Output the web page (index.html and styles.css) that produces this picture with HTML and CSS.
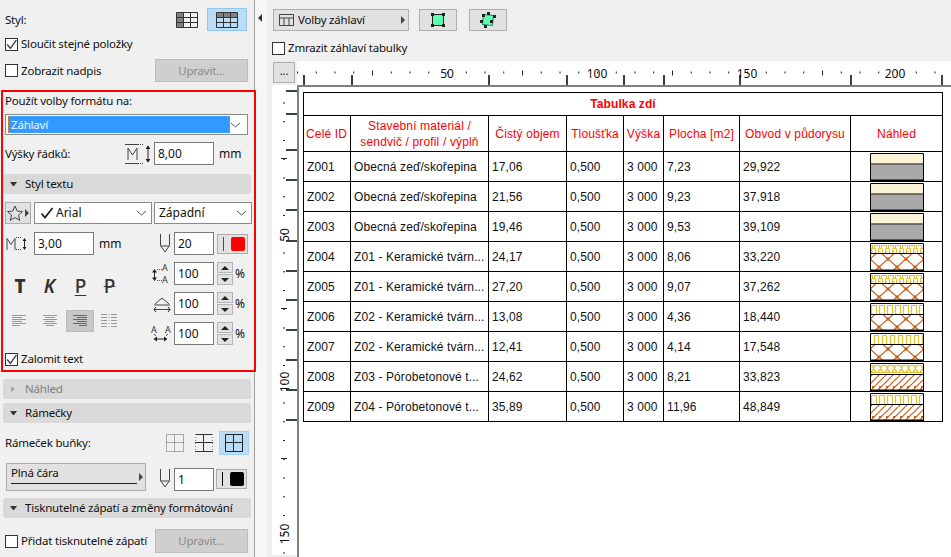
FILE: index.html
```html
<!DOCTYPE html>
<html lang="cs">
<head>
<meta charset="utf-8">
<title>Volby záhlaví</title>
<link rel="stylesheet" href="styles.css">
</head>
<body>
<svg class="defs" width="0" height="0" aria-hidden="true">
  <defs>
    <pattern id="p-zig" width="7" height="11" patternUnits="userSpaceOnUse"><path d="M0 2.500h2.500v3h2v-3H7M1.500 5.500v5.500M5.500 5.500v5.500M3.500 8.500h-2" fill="none" stroke="#e6bf2c" stroke-width="1.200"/></pattern>
    <pattern id="p-arch" width="8" height="11" patternUnits="userSpaceOnUse"><path d="M1.500 11V2.500h5V11" fill="none" stroke="#e6bf2c" stroke-width="1.200"/></pattern>
    <pattern id="p-arch2" width="8" height="11" patternUnits="userSpaceOnUse"><path d="M4.500 11V2.500H8M0 2.500h.5V11" fill="none" stroke="#e6bf2c" stroke-width="1.200"/></pattern>
    <pattern id="p-zig2" width="7" height="11" patternUnits="userSpaceOnUse"><path d="M0 2.500h2.500l1 3 1-3H7M1 9l2.500-3L6 9M0 9.500h7" fill="none" stroke="#e6bf2c" stroke-width="1.200"/></pattern>
    <pattern id="p-lat" width="18" height="16" patternUnits="userSpaceOnUse"><path d="M0 0L18 16M18 0L0 16" fill="none" stroke="#c8601a" stroke-width="1.200"/><rect x="7.500" y="6.500" width="3" height="3" fill="#c8601a"/><path d="M0 0h1.500v1.500H0zM16.500 0H18v1.500h-1.500zM0 14.500h1.500V16H0zM16.500 14.500H18V16h-1.500z" fill="#c8601a"/></pattern>
    <pattern id="p-diag" width="14" height="14" patternUnits="userSpaceOnUse"><path d="M0 7L7 0M0 14L14 0M7 14L14 7" fill="none" stroke="#c8601a" stroke-width="1.200"/><rect x="9" y="9" width="2" height="2" fill="#c8601a"/><rect x="2" y="9" width="2" height="2" fill="#c8601a"/></pattern>
    <symbol id="sw-plain" viewBox="0 0 54 28"><rect x=".5" y=".5" width="53" height="11" fill="#faf3d6"/><rect x=".5" y="11.500" width="53" height="16" fill="#a9a9a9"/><path d="M.5.5h53v26.500h-53zM0 11h54" fill="none" stroke="#000"/><path d="M0 27.500h54" stroke="#000"/></symbol>
    <symbol id="sw-a" viewBox="0 0 54 28"><rect x=".5" y=".5" width="53" height="10.500" fill="url(#p-zig)"/><rect x=".5" y="11" width="53" height="16" fill="url(#p-lat)"/><path d="M.5.5h53v26.500h-53zM0 10.500h54M0 27.500h54" fill="none" stroke="#000"/></symbol>
    <symbol id="sw-b" viewBox="0 0 54 28"><rect x=".5" y=".5" width="53" height="10.500" fill="url(#p-arch)"/><rect x=".5" y="11" width="53" height="16" fill="url(#p-lat)"/><path d="M.5.5h53v26.500h-53zM0 11.500h54M0 27.500h54" fill="none" stroke="#000"/></symbol>
    <symbol id="sw-c" viewBox="0 0 54 28"><rect x=".5" y=".5" width="53" height="10.500" fill="url(#p-arch2)"/><rect x=".5" y="11" width="53" height="16" fill="url(#p-lat)"/><path d="M.5.5h53v26.500h-53zM0 11.500h54M0 27.500h54" fill="none" stroke="#000"/></symbol>
    <symbol id="sw-d" viewBox="0 0 54 28"><rect x=".5" y=".5" width="53" height="10.500" fill="url(#p-zig2)"/><rect x=".5" y="11" width="53" height="16" fill="url(#p-diag)"/><path d="M.5.5h53v26.500h-53zM0 11.500h54M0 27.500h54" fill="none" stroke="#000"/></symbol>
    <symbol id="sw-e" viewBox="0 0 54 28"><rect x=".5" y=".5" width="53" height="10.500" fill="url(#p-arch)"/><rect x=".5" y="11" width="53" height="16" fill="url(#p-diag)"/><path d="M.5.5h53v26.500h-53zM0 11.500h54M0 27.500h54" fill="none" stroke="#000"/></symbol>
    <symbol id="i-pen" viewBox="0 0 12 22"><path d="M1.500 1v11.500L6 19l4.500-6.500V1M1.500 13h9" fill="none" stroke="#444"/></symbol>
    <symbol id="i-check" viewBox="0 0 12 12"><path d="M2 6l3 3.500L10.500 2" fill="none" stroke="#444" stroke-width="1.300"/></symbol>
  </defs>
</svg>

<div class="app">
  <aside class="sidebar">
    <div class="row r-style">
      <span class="lbl">Styl:</span>
      <span class="style-opts">
        <svg class="ic-table" width="22" height="16" viewBox="0 0 22 16"><rect x="1" y="1" width="7" height="14" fill="#808080"/><path d="M.5.5h21v15H.5zM7.500.5v15M14.500.5v15M.5 5.500h21M.5 10.500h21" fill="none" stroke="#333"/></svg>
        <span class="opt-on"><svg width="22" height="16" viewBox="0 0 22 16"><rect x="1" y="1" width="20" height="4" fill="#808080"/><path d="M.5.5h21v15H.5zM7.500.5v15M14.500.5v15M.5 5.500h21M.5 10.500h21" fill="none" stroke="#333"/></svg></span>
      </span>
    </div>
    <label class="row r-check1"><span class="cb"><svg width="12" height="12"><use href="#i-check"/></svg></span><span class="lbl">Sloučit stejné položky</span></label>
    <div class="row r-btn">
      <label class="chk"><span class="cb"></span><span class="lbl">Zobrazit nadpis</span></label>
      <span class="btn-off">Upravit...</span>
    </div>

    <section class="format">
      <div class="f-label lbl">Použít volby formátu na:</div>
      <div class="select sel-main"><span class="sel-val">Záhlaví</span><svg class="chev" width="11" height="6" viewBox="0 0 11 6"><path d="M1 1l4.500 4L10 1" fill="none" stroke="#555"/></svg></div>
      <div class="row r-height">
        <span class="lbl">Výšky řádků:</span>
        <svg class="ic-m" width="26" height="20" viewBox="0 0 26 20"><path d="M1 .5h13M1 19.500h13" stroke="#444"/><path d="M4 16V4l4.500 7L13 4v12" fill="none" stroke="#444"/><path d="M14 .5h6M14 19.500h6" stroke="#444" stroke-dasharray="1 1"/><path d="M24 2v16" stroke="#222"/><path d="M21.500 5L24 1.500 26.500 5zM21.500 15L24 18.500 26.500 15z" fill="#222"/></svg>
        <span class="input w60">8,00</span>
        <span class="unit">mm</span>
      </div>
      <div class="head"><i class="tri"></i>Styl textu</div>
      <div class="row r-font">
        <span class="btn star"><svg width="24" height="16" viewBox="0 0 24 16"><path d="M9 1l2.200 5 5.300.5-4 3.600 1.200 5.200L9 12.600l-4.700 2.700 1.200-5.200-4-3.600L6.800 6z" fill="none" stroke="#444"/><path d="M19 4l4 4-4 4z" fill="#444"/></svg></span>
        <span class="select sel-font"><svg class="tick" width="14" height="12" viewBox="0 0 14 12"><path d="M1.500 6.500L5 10.500 12.500 1" fill="none" stroke="#222" stroke-width="1.800"/></svg><span>Arial</span><svg class="chev" width="11" height="6" viewBox="0 0 11 6"><path d="M1 1l4.500 4L10 1" fill="none" stroke="#555"/></svg></span>
        <span class="select sel-script"><span>Západní</span><svg class="chev" width="11" height="6" viewBox="0 0 11 6"><path d="M1 1l4.500 4L10 1" fill="none" stroke="#555"/></svg></span>
      </div>
      <div class="f-grid">
        <div class="f-left">
          <div class="f-size">
            <svg class="ic-ms" width="21" height="14" viewBox="0 0 21 14"><path d="M1 13V1.500l4 6 4-6V13" fill="none" stroke="#444"/><path d="M10 .5h6M10 12.500h6" stroke="#444" stroke-dasharray="1 1"/><path d="M18.500 2v10" stroke="#222"/><path d="M16.500 4L18.500 1 20.500 4zM16.500 10l2 3 2-3z" fill="#222"/></svg>
            <span class="input w60">3,00</span>
            <span class="unit">mm</span>
          </div>
          <div class="f-type">
            <b class="g g-t">T</b><em class="g g-k">K</em><u class="g g-p">P</u><s class="g g-s">P</s>
          </div>
          <div class="f-align">
            <span class="al"><svg width="16" height="12" viewBox="0 0 16 12"><path d="M1 .5h14M1 2.500h10M1 4.500h14M1 6.500h10M1 8.500h14M1 10.500h8" stroke="#999"/></svg></span>
            <span class="al"><svg width="16" height="12" viewBox="0 0 16 12"><path d="M1 .5h14M3 2.500h10M1 4.500h14M3 6.500h10M1 8.500h14M4 10.500h8" stroke="#999"/></svg></span>
            <span class="al al-on"><svg width="16" height="12" viewBox="0 0 16 12"><path d="M1 .5h14M5 2.500h10M1 4.500h14M5 6.500h10M1 8.500h14M7 10.500h8" stroke="#666"/></svg></span>
            <span class="al"><svg width="16" height="14" viewBox="0 0 16 14"><path d="M0 .5h6M0 3.500h6M0 6.500h6M0 9.500h6M0 12.500h6M10 .5h6M10 3.500h6M10 6.500h6M10 9.500h6M10 12.500h6" stroke="#999"/><path d="M8 0v14" stroke="#999" stroke-dasharray="1 2"/></svg></span>
          </div>
        </div>
        <div class="f-right">
          <div class="fr"><svg class="fr-ic" width="12" height="22"><use href="#i-pen"/></svg><span class="input">20</span><span class="color"><i class="c-line red"></i><i class="c-box red"></i></span></div>
          <div class="fr"><svg class="fr-ic" width="20" height="23" viewBox="0 0 20 23"><text x="14" y="9" class="mini">A</text><text x="14" y="21" class="mini">A</text><path d="M3.500 9v8" stroke="#222"/><path d="M1 10.500L3.500 7 6 10.500zM1 15.500L3.500 19 6 15.500z" fill="#222"/><path d="M6 7.500h5M6 18.500h5" stroke="#555" stroke-dasharray="1 1"/></svg><span class="input">100</span><span class="stepper"><i class="up"></i><i class="dn"></i></span><span class="pct">%</span></div>
          <div class="fr"><svg class="fr-ic" width="18" height="16" viewBox="0 0 18 16"><path d="M2 8l7-6 7 6" fill="none" stroke="#444"/><path d="M1 9h16M1 13.500h16" stroke="#444"/><path d="M3 11l-2 2.500L3 16M15 11l2 2.500-2 2.500" fill="none" stroke="#222"/></svg><span class="input">100</span><span class="stepper"><i class="up"></i><i class="dn"></i></span><span class="pct">%</span></div>
          <div class="fr"><svg class="fr-ic ic-wide" width="23" height="23" viewBox="0 0 23 23"><text x="5" y="11" class="mini">A</text><text x="19" y="11" class="mini">A</text><path d="M6 17h11" stroke="#222"/><path d="M8 14.500L4.500 17 8 19.500zM15 14.500L18.500 17 15 19.500z" fill="#222"/><path d="M5 12l2 2M19 12l-2 2" stroke="#555"/></svg><span class="input">100</span><span class="stepper"><i class="up"></i><i class="dn"></i></span><span class="pct">%</span></div>
        </div>
      </div>
      <label class="row r-wrap"><span class="cb"><svg width="12" height="12"><use href="#i-check"/></svg></span><span class="lbl">Zalomit text</span></label>
    </section>

    <div class="head head-dis head-a"><i class="tri-r"></i>Náhled</div>
    <div class="head head-b"><i class="tri"></i>Rámečky</div>
    <div class="row r-border">
      <span class="lbl">Rámeček buňky:</span>
      <span class="b-opts">
        <svg width="18" height="18" viewBox="0 0 18 18"><path d="M.5.5h17v17H.5zM8.500.5v17M.5 8.500h17" fill="none" stroke="#666" stroke-dasharray="1 1"/></svg>
        <svg class="b2" width="18" height="18" viewBox="0 0 18 18"><path d="M0 .5h18M0 8.500h18M0 17.500h18" stroke="#333"/><path d="M8.500 0v18" stroke="#333"/><path d="M.5 0v18M17.500 0v18" stroke="#888" stroke-dasharray="1 2"/></svg>
        <span class="b-on"><svg width="18" height="18" viewBox="0 0 18 18"><path d="M.5.5h17v17H.5zM8.500.5v17M.5 8.500h17" fill="none" stroke="#222"/></svg></span>
      </span>
    </div>
    <div class="row r-line">
      <span class="line-btn"><span class="lt">Plná čára</span><i class="ln"></i><i class="ar"></i></span>
      <svg class="pen2" width="12" height="22"><use href="#i-pen"/></svg>
      <span class="input w40">1</span>
      <span class="color c2"><i class="c-line blk"></i><i class="c-box blk"></i></span>
    </div>
    <div class="head head-c"><i class="tri"></i>Tisknutelné zápatí a změny formátování</div>
    <div class="row r-foot">
      <label class="chk"><span class="cb"></span><span class="lbl">Přidat tisknutelné zápatí</span></label>
      <span class="btn-off">Upravit...</span>
    </div>
  </aside>

  <div class="strip"><i class="tri-l"></i></div>

  <main class="main">
    <div class="toolbar">
      <span class="popup">
        <svg width="15" height="12" viewBox="0 0 15 12"><path d="M.5.5h14v11H.5zM.5 4h14M5 4v7.500M10 4v7.500" fill="none" stroke="#444"/></svg>
        <span class="lbl">Volby záhlaví</span><i class="ar"></i>
      </span>
      <span class="tbtn"><svg width="14" height="14" viewBox="0 0 14 14"><rect x="1.500" y="1.500" width="11" height="11" fill="#5dffb0" stroke="#222"/><path d="M0 0h3v3H0zM11 0h3v3h-3zM0 11h3v3H0zM11 11h3v3h-3z" fill="#222"/></svg></span>
      <span class="tbtn tb2"><svg width="16" height="16" viewBox="0 0 16 16"><path d="M3 3h10v10H3z" fill="#5dffb0" stroke="#1f8a60" transform="rotate(6 8 8)"/><path d="M2 2h3v3H2zM7 0h3v3H7zM13 3h3v3h-3zM0 8h3v3H0zM10 8h3v3h-3zM4 13h3v3H4z" fill="#222"/></svg></span>
    </div>
    <label class="freeze"><span class="cb"></span><span class="lbl">Zmrazit záhlaví tabulky</span></label>

    <div class="sheet">
      <div class="corner"><span class="more">...</span></div>
      <svg class="ruler-top" width="654" height="24" viewBox="0 0 654 24">
        <path d="M0 11.500H654" stroke="#222" stroke-width="2" stroke-dasharray="1 17.750" stroke-dashoffset="0"/>
        <path d="M75 12H654" stroke="#222" stroke-width="5" stroke-dasharray="1 149"/>
        <path d="M7 14v10M55 14v10M192 14v10M270 14v10M327 14v10M367 14v10M443 14v10M554 14v10M645 14v10" stroke="#36424a" stroke-width="2"/>
        <text x="150" y="17" class="rt">50</text>
        <text x="300" y="17" class="rt">100</text>
        <text x="450" y="17" class="rt">150</text>
        <text x="598" y="17" class="rt">200</text>
      </svg>
      <svg class="ruler-left" width="25" height="470" viewBox="0 0 25 470">
        <path d="M12 17.500V470" stroke="#222" stroke-width="2" stroke-dasharray="1 17.750"/>
        <path d="M9 73.500h6M9 223.500h6M9 373.500h6" stroke="#222"/>
        <path d="M14 6h11M14 29h11M14 65h11M14 95h11M14 125h11M14 156h11M14 186h11M14 215h11M14 245h11M14 275h11M14 305h11M14 335h11" stroke="#36424a" stroke-width="2"/>
        <text class="rt" transform="translate(17 150) rotate(-90)">50</text>
        <text class="rt" transform="translate(17 297) rotate(-90)">100</text>
        <text class="rt" transform="translate(17 449) rotate(-90)">150</text>
      </svg>
      <div class="canvas">
        <table class="sched">
          <colgroup><col class="c1"><col class="c2w"><col class="c3"><col class="c4"><col class="c5"><col class="c6"><col class="c7"><col class="c8"></colgroup>
          <tr class="t-title"><th colspan="8">Tabulka zdí</th></tr>
          <tr class="t-head">
            <td class="left">Celé ID</td><td>Stavební materiál /<br>sendvič / profil / výplň</td><td>Čistý objem</td><td>Tloušťka</td><td>Výška</td><td>Plocha [m2]</td><td>Obvod v půdorysu</td><td>Náhled</td>
          </tr>
          <tr><td>Z001</td><td>Obecná zeď/skořepina</td><td>17,06</td><td>0,500</td><td>3 000</td><td>7,23</td><td>29,922</td><td class="pv"><svg width="54" height="28"><use href="#sw-plain"/></svg></td></tr>
          <tr><td>Z002</td><td>Obecná zeď/skořepina</td><td>21,56</td><td>0,500</td><td>3 000</td><td>9,23</td><td>37,918</td><td class="pv"><svg width="54" height="28"><use href="#sw-plain"/></svg></td></tr>
          <tr><td>Z003</td><td>Obecná zeď/skořepina</td><td>19,46</td><td>0,500</td><td>3 000</td><td>9,53</td><td>39,109</td><td class="pv"><svg width="54" height="28"><use href="#sw-plain"/></svg></td></tr>
          <tr><td>Z004</td><td>Z01 - Keramické tvárn...</td><td>24,17</td><td>0,500</td><td>3 000</td><td>8,06</td><td>33,220</td><td class="pv"><svg width="54" height="28"><use href="#sw-a"/></svg></td></tr>
          <tr><td>Z005</td><td>Z01 - Keramické tvárn...</td><td>27,20</td><td>0,500</td><td>3 000</td><td>9,07</td><td>37,262</td><td class="pv"><svg width="54" height="28"><use href="#sw-a"/></svg></td></tr>
          <tr><td>Z006</td><td>Z02 - Keramické tvárn...</td><td>13,08</td><td>0,500</td><td>3 000</td><td>4,36</td><td>18,440</td><td class="pv"><svg width="54" height="28"><use href="#sw-b"/></svg></td></tr>
          <tr><td>Z007</td><td>Z02 - Keramické tvárn...</td><td>12,41</td><td>0,500</td><td>3 000</td><td>4,14</td><td>17,548</td><td class="pv"><svg width="54" height="28"><use href="#sw-c"/></svg></td></tr>
          <tr><td>Z008</td><td>Z03 - Pórobetonové t...</td><td>24,62</td><td>0,500</td><td>3 000</td><td>8,21</td><td>33,823</td><td class="pv"><svg width="54" height="28"><use href="#sw-d"/></svg></td></tr>
          <tr><td>Z009</td><td>Z04 - Pórobetonové t...</td><td>35,89</td><td>0,500</td><td>3 000</td><td>11,96</td><td>48,849</td><td class="pv"><svg width="54" height="28"><use href="#sw-e"/></svg></td></tr>
        </table>
      </div>
    </div>
  </main>
</div>
</body>
</html>
```

FILE: styles.css
```css
* { box-sizing: border-box; }
html, body { margin: 0; height: 100%; }
body { width: 951px; height: 557px; overflow: hidden; background: #f0f0f0; color: #111; font: 11.5px/16px "Noto Sans", sans-serif; letter-spacing: -.2px; }
i { display: block; font-style: normal; }
svg { display: block; flex: none; }
.defs { position: absolute; }
.app { display: flex; height: 557px; }

.sidebar { flex: none; width: 255px; padding-top: 8px; border-right: 1px solid #a0a0a0; }
.row { display: flex; align-items: center; margin-left: 5px; }
.lbl { white-space: nowrap; }
.cb { flex: none; display: block; width: 13px; height: 13px; background: #fff; border: 1px solid #333; margin-right: 3px; }
.cb svg { margin: -1px 0 0 -1px; width: 13px; height: 13px; }
.chk { display: flex; align-items: center; width: 150px; }
.r-style { height: 23px; justify-content: space-between; width: 242px; }
.style-opts { display: flex; align-items: center; gap: 9px; }
.opt-on { display: flex; align-items: center; justify-content: center; width: 40px; height: 23px; background: #bbdcf6; border: 1px solid #92c8f2; }
.r-check1 { height: 20px; margin-top: 3px; }
.r-btn { height: 23px; margin-top: 5px; }
.btn-off { display: flex; align-items: center; justify-content: center; width: 93px; height: 23px; background: #cfcfcf; border: 1px solid #bdbdbd; color: #8a8a8a; }

.format { position: relative; z-index: 1; width: 255px; height: 282px; margin: 8px 0 0 1px; border: 2px solid #f00; }
.f-label { height: 18px; margin-left: 2px; line-height: 18px; }
.select { display: flex; align-items: center; background: #fff; border: 1px solid #8a8a8a; height: 21px; }
.sel-main { width: 243px; margin: 4px 0 0 2px; padding: 2px; }
.sel-val { display: block; width: 222px; height: 17px; line-height: 15px; padding-left: 2px; background: #3399ff; border: 1px dotted #c88a3a; color: #e8f4ff; }
.chev { margin-left: auto; margin-right: 4px; }
.r-height { margin: 7px 0 0 2px; height: 23px; }
.r-height .lbl { width: 119px; }
.ic-m { margin-right: 4px; }
.input { display: flex; align-items: center; flex: none; height: 23px; padding-left: 3px; background: #fff; border: 1px solid #7a7a7a; font-size: 12px; letter-spacing: 0; }
.w60 { width: 60px; }
.w40 { width: 40px; }
.unit { margin-left: 5px; font-size: 12px; letter-spacing: 0; }

.head { display: flex; align-items: center; height: 20px; width: 248px; background: #d9d9d9; border-radius: 3px; padding-left: 7px; white-space: nowrap; }
.format .head { margin-top: 9px; }
.tri { height: 0; margin-right: 8px; border: 3.500px solid transparent; border-top: 4px solid #333; border-bottom: 0; width: 7px; }
.tri-r { width: 0; height: 0; margin: 0 10px 0 1px; border-left: 4px solid #a5a5a5; border-top: 3.500px solid transparent; border-bottom: 3.500px solid transparent; }
.head-dis { color: #808080; }
.head-a { margin: 7px 0 0 3px; }
.head-b { margin: 4px 0 0 3px; }
.head-c { margin: 7px 0 0 3px; }

.r-font { margin: 8px 0 0 2px; height: 22px; }
.btn { display: flex; align-items: center; justify-content: center; background: #e1e1e1; border: 1px solid #adadad; }
.star { width: 26px; height: 22px; }
.sel-font { width: 118px; height: 22px; margin-left: 3px; padding-left: 5px; font-size: 12px; letter-spacing: 0; }
.tick { margin-right: 2px; }
.sel-script { width: 98px; height: 22px; margin-left: 2px; padding-left: 4px; font-size: 12px; letter-spacing: 0; }

.f-grid { display: flex; margin: 8px 0 0 2px; height: 113px; }
.f-left { width: 147px; }
.f-size { display: flex; align-items: center; height: 23px; }
.ic-ms { margin: 0 7px 0 1px; }
.f-type { display: flex; align-items: center; height: 26px; margin-top: 18px; font-size: 19px; line-height: 26px; color: #333; letter-spacing: 0; }
.g { display: block; width: 30px; text-align: center; }
.g-t { font-weight: 800; }
.g-k { font-weight: 600; width: 29px; }
.g-p { width: 33px; text-underline-offset: 2px; text-decoration: underline; text-decoration-thickness: 1px; font-weight: 500; }
.g-s { width: 25px; text-decoration: line-through; text-decoration-thickness: 1px; font-weight: 500; }
.f-align { display: flex; align-items: center; height: 22px; margin-top: 11px; }
.al { display: flex; align-items: center; justify-content: center; width: 16px; height: 22px; margin-left: 6px; }
.al + .al { margin-left: 15px; }
.al-on { width: 28px; background: #c8c8c8; border: 1px solid #bcbcbc; }
.al + .al-on { margin-left: 8px; }
.al-on + .al { margin-left: 7px; }
.f-right { display: flex; flex-direction: column; gap: 7px; }
.fr { display: grid; grid-template-columns: 19px 40px 19px auto; column-gap: 3px; align-items: center; height: 23px; }
.fr-ic { justify-self: end; overflow: visible; }
.ic-wide { justify-self: center; margin-left: -2px; }
.fr .color { margin-left: 0; grid-column: 3 / 5; }
.color { display: flex; align-items: center; margin-left: 3px; width: 31px; height: 20px; background: #e1e1e1; border: 1px solid #adadad; flex: none; }
.c-line { width: 1px; height: 14px; margin-left: 5px; }
.c-box { width: 14px; height: 14px; margin-left: 7px; border-radius: 2px; }
.red { background: #f00; }
.blk { background: #000; }
.stepper { display: flex; flex-direction: column; gap: 1px; width: 16px; height: 23px; }
.stepper i { flex: 1; background: #e1e1e1; border: 1px solid #b5b5b5; display: flex; align-items: center; justify-content: center; }
.stepper i::after { content: ""; border-left: 4px solid transparent; border-right: 4px solid transparent; }
.stepper .up::after { border-bottom: 4px solid #222; }
.stepper .dn::after { border-top: 4px solid #222; }
.pct { margin-left: -4px; font-size: 12px; letter-spacing: 0; }
.mini { font: 9px "Noto Sans", sans-serif; text-anchor: middle; fill: #333; letter-spacing: 0; }
.r-wrap { height: 20px; margin: 4px 0 0 2px; }

.r-border { height: 24px; margin-top: 8px; }
.b-opts { display: flex; align-items: center; margin-left: auto; margin-right: 5px; }
.b2 { margin: 0 6px 0 11px; }
.b-on { display: flex; align-items: center; justify-content: center; width: 30px; height: 24px; background: #bbdcf6; border: 1px solid #a5d0f2; }
.r-line { align-items: flex-end; height: 29px; margin: 7px 0 0 6px; }
.line-btn { position: relative; display: block; width: 140px; height: 28px; background: #e1e1e1; border: 1px solid #adadad; }
.lt { display: block; padding-left: 4px; line-height: 18px; }
.ln { position: absolute; left: 4px; top: 19px; width: 126px; height: 1px; background: #222; }
.ar { width: 0; height: 0; border-left: 4px solid #444; border-top: 4px solid transparent; border-bottom: 4px solid transparent; }
.line-btn .ar { position: absolute; right: 2px; top: 9px; }
.pen2 { margin: 0 3px 1px 13px; }
.c2 { margin: 0 0 2px 2px; }
.r-foot { height: 24px; margin-top: 11px; }
.r-foot .btn-off { height: 24px; }

.strip { flex: none; width: 12px; background: #f6f6f6; padding: 14px 0 0 3px; }
.tri-l { width: 0; height: 0; border-right: 4px solid #333; border-top: 4px solid transparent; border-bottom: 4px solid transparent; }

.main { flex: 1; min-width: 0; padding: 9px 0 0 5px; }
.toolbar { display: flex; align-items: center; height: 22px; padding-left: 1px; }
.popup { display: flex; align-items: center; width: 136px; height: 22px; background: #e1e1e1; border: 1px solid #adadad; padding-left: 5px; }
.popup .lbl { margin-left: 4px; }
.popup .ar { margin-left: auto; margin-right: 3px; }
.tbtn { display: flex; align-items: center; justify-content: center; width: 38px; height: 22px; margin-left: 10px; background: #e1e1e1; border: 1px solid #adadad; }
.tb2 { margin-left: 12px; }
.freeze { display: flex; align-items: center; height: 20px; margin-top: 7px; }
.sheet { display: grid; grid-template-columns: 25px 654px; grid-template-rows: 24px 472px; margin-top: 3px; }
.corner { padding: 1px 0 0 1px; }
.more { display: flex; align-items: center; justify-content: center; width: 22px; height: 21px; background: #e1e1e1; border: 1px solid #adadad; line-height: 12px; padding-bottom: 4px; }
.ruler-top, .ruler-left, .canvas { background: #fff; }
.rt { font: 12px "Noto Sans", sans-serif; fill: #111; text-anchor: middle; letter-spacing: 0; }
.canvas { border-left: 2px solid #808080; border-top: 2px solid #808080; padding: 5px 0 0 4px; }

.sched { table-layout: fixed; width: 639px; border-collapse: collapse; font: 12px/16px "Liberation Sans", Arial, sans-serif; color: #111; letter-spacing: .1px; }
.sched td, .sched th { border: 1px solid #000; padding: 1px 0 0 3px; white-space: nowrap; overflow: hidden; }
.sched tr { height: 30px; }
.sched .t-title { height: 23px; }
.sched .t-title th { color: #f00; font-size: 12px; text-align: center; padding: 0; }
.sched .t-head { height: 36px; }
.sched .t-head td { color: #f00; text-align: center; padding: 0; letter-spacing: .15px; }
.sched .t-head td.left { text-align: left; padding-left: 2px; }
.c1 { width: 47px; }
.c2w { width: 138px; }
.c3 { width: 78px; }
.c4 { width: 57px; }
.c5 { width: 40px; }
.c6 { width: 76px; }
.c7 { width: 111px; }
.c8 { width: 92px; }
.sched td.pv { padding: 0; }
.pv svg { margin: 0 auto; }
```
